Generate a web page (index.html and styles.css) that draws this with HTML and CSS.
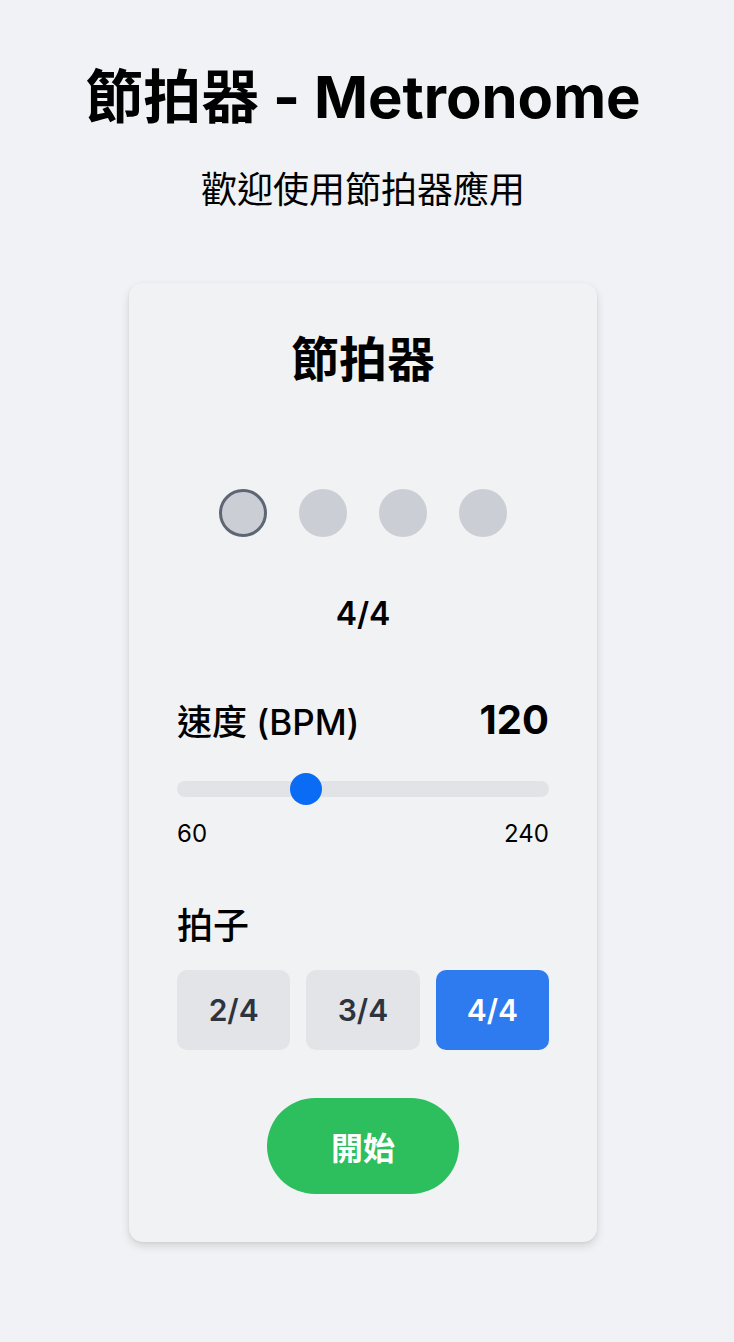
FILE: index.html
```html
<!DOCTYPE html>
<html lang="zh-Hant">
<head>
<meta charset="utf-8">
<title>節拍器 - Metronome</title>
<link rel="stylesheet" href="styles.css">
</head>
<body>
<main class="page">
  <h1 class="page-title">節拍器 - Metronome</h1>
  <p class="page-sub">歡迎使用節拍器應用</p>
  <section class="card">
    <h2 class="card-title">節拍器</h2>
    <div class="dots">
      <span class="dot dot-current"></span>
      <span class="dot"></span>
      <span class="dot"></span>
      <span class="dot"></span>
    </div>
    <div class="sig">4/4</div>
    <div class="bpm-row">
      <span class="bpm-label">速度 (BPM)</span>
      <span class="bpm-value">120</span>
    </div>
    <input class="slider" type="range" min="60" max="240" value="120">
    <div class="range-labels"><span>60</span><span>240</span></div>
    <div class="beats-label">拍子</div>
    <div class="beats">
      <button class="beat-btn">2/4</button>
      <button class="beat-btn">3/4</button>
      <button class="beat-btn beat-active">4/4</button>
    </div>
    <div class="start-wrap"><button class="start-btn">開始</button></div>
  </section>
</main>
</body>
</html>
```
FILE: styles.css
```css
* { box-sizing: border-box; }
html, body { margin: 0; padding: 0; }
body {
  background: #f0f2f5;
  font-family: Inter, "Noto Sans CJK TC", sans-serif;
  color: #000;
  min-height: 1342px;
}
.page {
  width: 726px;
  display: flex;
  flex-direction: column;
  align-items: center;
  padding-top: 61px;
}
.page-title {
  margin: 0;
  font-size: 58px;
  line-height: 72px;
  font-weight: 700;
}
.page-sub {
  margin: 35px 0 0;
  font-size: 36px;
  line-height: 44px;
  font-weight: 400;
}
.card {
  margin-top: 71px;
  width: 468px;
  padding: 48px;
  background: #f1f2f4;
  border-radius: 14px;
  box-shadow: 0 4px 10px rgba(0,0,0,0.12), 0 1px 3px rgba(0,0,0,0.06);
  display: flex;
  flex-direction: column;
}
.card-title {
  margin: 0;
  text-align: center;
  font-size: 48px;
  line-height: 58px;
  font-weight: 700;
}
.dots {
  margin-top: 100px;
  display: flex;
  justify-content: center;
  gap: 32px;
}
.dot {
  width: 48px;
  height: 48px;
  border-radius: 50%;
  background: #cbced5;
}
.dot-current { border: 3px solid #5e6674; }
.sig {
  margin-top: 58px;
  text-align: center;
  font-size: 32px;
  line-height: 38px;
  font-weight: 600;
}
.bpm-row {
  margin-top: 62px;
  display: flex;
  justify-content: space-between;
  align-items: center;
  height: 48px;
}
.bpm-label { font-size: 35px; font-weight: 500; }
.bpm-value { font-size: 40px; font-weight: 700; }
.slider {
  -webkit-appearance: none;
  appearance: none;
  margin: 38px 0 0;
  width: 100%;
  height: 16px;
  border-radius: 8px;
  background: #e1e3e7;
  outline: none;
}
.slider::-webkit-slider-thumb {
  -webkit-appearance: none;
  appearance: none;
  width: 32px;
  height: 32px;
  border-radius: 50%;
  background: #0a6cf5;
  border: none;
}
.range-labels {
  margin-top: 23px;
  display: flex;
  justify-content: space-between;
  font-size: 24px;
  line-height: 28px;
}
.beats-label {
  margin-top: 57px;
  font-size: 36px;
  line-height: 42px;
  font-weight: 500;
}
.beats {
  margin-top: 23px;
  display: grid;
  grid-template-columns: 1fr 1fr 1fr;
  gap: 16px;
}
.beat-btn {
  height: 80px;
  border: none;
  border-radius: 10px;
  background: #e2e4e8;
  color: #2d3440;
  font-family: Inter, "Noto Sans CJK TC", sans-serif;
  font-size: 30px;
  font-weight: 600;
}
.beat-active { background: #2d7bef; color: #fff; }
.start-wrap {
  margin-top: 48px;
  display: flex;
  justify-content: center;
}
.start-btn {
  width: 192px;
  height: 96px;
  border: none;
  border-radius: 48px;
  background: #2dbf5e;
  color: #fff;
  font-family: Inter, "Noto Sans CJK TC", sans-serif;
  font-size: 32px;
  font-weight: 700;
}
```
